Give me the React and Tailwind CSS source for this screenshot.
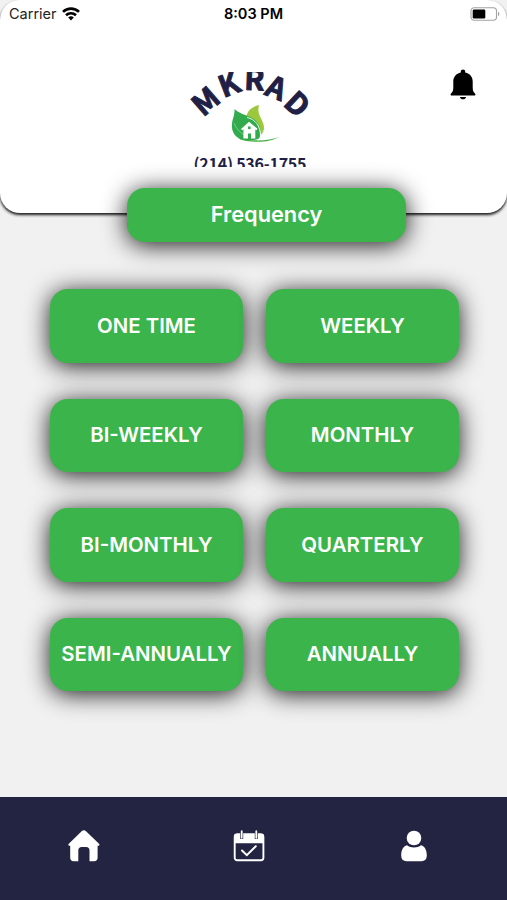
// ─── Frequency Screen ───
import React from 'react';

const frequencies = [
  'ONE TIME',
  'WEEKLY',
  'BI-WEEKLY',
  'MONTHLY',
  'BI-MONTHLY',
  'QUARTERLY',
  'SEMI-ANNUALLY',
  'ANNUALLY',
];

// Letters of the curved brand name, placed around the arc
const brandLetters = [
  { char: 'M', x: 205.5, y: 101, angle: -41 },
  { char: 'K', x: 229, y: 84, angle: -21 },
  { char: 'R', x: 254.5, y: 79, angle: 2 },
  { char: 'A', x: 276.5, y: 87.5, angle: 22 },
  { char: 'D', x: 297.5, y: 104, angle: 43 },
];

function WifiIcon() {
  return (
    <svg width="18" height="14" viewBox="0 0 18 14" fill="none" stroke="#000" strokeWidth="2.6">
      <path d="M1 4.900a11.400 11.400 0 0 1 16 0" />
      <path d="M4 8.200a7.200 7.200 0 0 1 10 0" />
      <path d="M9 13.400 6.200 10.500a4 4 0 0 1 5.600 0Z" fill="#000" stroke="none" />
    </svg>
  );
}

function BatteryIcon() {
  return (
    <svg width="32" height="14" viewBox="0 0 32 14">
      <rect x="2" y="0.7" width="25.5" height="12.6" rx="3.2" fill="none" stroke="#a3a3a3" strokeWidth="1.1" />
      <rect x="3.700" y="2.400" width="12.600" height="9.200" rx="1.3" fill="#000" />
      <path d="M29 4.800c1.800.6 1.800 3.800 0 4.400Z" fill="#a3a3a3" />
    </svg>
  );
}

function BellIcon() {
  return (
    <svg width="26" height="32" viewBox="0 0 26 32" fill="#000">
      <path d="M13 .6c1.300 0 2.200.9 2.200 2.200v.7c4.800 1 7.500 4.500 7.500 9v5.800c0 2.900.5 4.700 2.300 6.200.9.900.4 2.100-.8 2.100H1.800c-1.200 0-1.700-1.200-.8-2.100 1.800-1.500 2.300-3.300 2.300-6.200v-5.800c0-4.500 2.700-8 7.500-9v-.7C10.800 1.500 11.700.6 13 .6Z" />
      <path d="M10 28h6c-.2 1.500-1.400 2.300-3 2.300S10.200 29.500 10 28Z" />
    </svg>
  );
}

function Logo() {
  return (
    <svg className="overflow-hidden" width="134" height="95" viewBox="184 72 134 95">
      <g fill="#211f45" fontFamily="'Noto Sans CJK SC', sans-serif" fontWeight="700" fontSize="29.500" textAnchor="middle">
        {brandLetters.map(({ char, x, y, angle }) => (
          <text key={char} transform={`translate(${x} ${y}) rotate(${angle})`} y="11" stroke="#211f45" strokeWidth="1">
            {char}
          </text>
        ))}
      </g>

      {/* Leaves */}
      <path d="M259 105c-6 1.500-12 5-12.500 12 8 2 14.500 9 14.500 18 4.500-5 3.300-10 .5-15.500-2.800-5.500-4-9-2.500-14.500Z" fill="#9bc83c" />
      <path d="M234.500 109c6 6 16.500 6.500 22 12.500 4.500 5 5.300 12 2.500 17-6 2.800-15 2.800-20 0-5-3-7.800-8-7-15 .6-5.500 3-9 2.500-14.500Z" fill="#31ab4b" />
      <path d="M247 117.500c8 1.500 13.500 8.500 13.500 18" fill="none" stroke="#fff" strokeWidth="0.900" />
      <path d="M234 123c2 6 6 9 13 14.500" fill="none" stroke="#fff" strokeWidth="0.600" opacity="0.600" />
      <path d="M238 138.500c14 2.500 30 3 41-1.500-9 5.800-29 6.500-41 1.500Z" fill="#43ad43" />

      {/* House */}
      <path d="m241 129 8-7.200 8.500 7-1 1.400-1.200-.8v9.200h-4.300v-5h-3v5h-4.600v-9.300l-1.400 1Z" fill="#fff" />
      <rect x="248" y="126.500" width="2.600" height="2.600" fill="#31ab4b" />

      <text
        x="193.500"
        y="169.500"
        fill="#211f45"
        fontFamily="'Noto Sans CJK SC', sans-serif"
        fontWeight="700"
        fontSize="16"
        textLength="113"
      >
        (214) 536-1755
      </text>
    </svg>
  );
}

function HomeIcon() {
  return (
    <svg width="32" height="32" viewBox="0 0 32 32" fill="#fff">
      <path d="M13.900 1.100c1.100-1 2.800-1 3.900 0L31 13.800c.9.900.3 2-.8 2h-.6v12c0 2.100-1.300 3.400-3.400 3.400h-4.700V20.500c0-2.200-1.200-3.400-3.400-3.400h-4.400c-2.200 0-3.400 1.200-3.400 3.400v10.700H5.600c-2.100 0-3.400-1.300-3.400-3.400v-12h-.6c-1.100 0-1.700-1.100-.8-2Z" />
    </svg>
  );
}

function CalendarIcon() {
  return (
    <svg width="32" height="32" viewBox="0 0 32 32" fill="none">
      <rect x="1.700" y="4.500" width="28.700" height="25.800" rx="2.500" stroke="#fff" strokeWidth="1.900" />
      <path d="M1 6.500C1 4.500 2 3.600 4 3.600h24c2 0 3 .9 3 2.900v6.700H1Z" fill="#fff" />
      <path d="M8.700 3v6M23.300 3v6" stroke="#232442" strokeWidth="3" />
      <path d="M8.700 1.200v6.600M23.300 1.200v6.600" stroke="#fff" strokeWidth="1.800" strokeLinecap="round" />
      <path d="m9 20.500 4.800 4.700 9-9" stroke="#fff" strokeWidth="2" strokeLinecap="round" />
    </svg>
  );
}

function UserIcon() {
  return (
    <svg width="28" height="32" viewBox="0 0 28 32" fill="#fff">
      <circle cx="14" cy="8" r="7.300" />
      <path d="M7 15.300c1.900 1.500 4.300 2.200 7 2.200s5.100-.7 7-2.200c3.900 1 5.800 5 5.800 10.200 0 3.800-1.800 5.700-5.300 5.700h-15c-3.500 0-5.300-1.900-5.300-5.700 0-5.200 1.900-9.200 5.800-10.200Z" />
    </svg>
  );
}

export default function App() {
  return (
    <div className="flex h-[900px] w-[507px] flex-col overflow-hidden bg-[#f1f1f1] font-['Inter',sans-serif]">
      {/* Header */}
      <header className="h-[213px] shrink-0 rounded-[20px] bg-white shadow-[0_2px_3px_rgba(0,0,0,0.9)]">
        <div className="grid h-[27px] grid-cols-3 items-center pr-[6px] pl-[9px] text-[14.5px] text-black">
          <div className="flex items-center gap-[5px] text-[#222]">
            <span>Carrier</span>
            <WifiIcon />
          </div>
          <span className="-ml-[3px] text-center text-[14.5px] font-semibold">8:03 PM</span>
          <div className="flex justify-end">
            <BatteryIcon />
          </div>
        </div>

        <div className="flex justify-between pt-[45px] pr-[31px] pl-[184px]">
          <Logo />
          <div className="-mt-[3px]">
            <BellIcon />
          </div>
        </div>
      </header>

      {/* Title overlapping the header edge */}
      <h1 className="relative -mt-[25px] ml-[127px] flex h-[54px] w-[279px] shrink-0 items-center justify-center rounded-[18px] bg-[#3bb44b] pb-[2px] text-[21.8px] font-semibold text-white shadow-[0_3px_25px_rgba(0,0,0,0.9)]">
        Frequency
      </h1>

      {/* Options */}
      <main className="relative mt-[47px] ml-[50px] grid w-[409px] grid-cols-2 gap-x-[23px] gap-y-[36px]">
        {frequencies.map((label) => (
          <button
            key={label}
            className="h-[73.5px] rounded-[18px] bg-[#3bb44b] pt-px text-[20.4px] font-semibold whitespace-nowrap text-white shadow-[0_3px_25px_rgba(0,0,0,0.9)]"
          >
            {label}
          </button>
        ))}
      </main>

      {/* Bottom nav */}
      <nav className="mt-auto grid h-[103px] shrink-0 grid-cols-3 justify-items-center bg-[#232442] pt-[33px] pr-[10px] pl-[1px]">
        <HomeIcon />
        <CalendarIcon />
        <UserIcon />
      </nav>
    </div>
  );
}
